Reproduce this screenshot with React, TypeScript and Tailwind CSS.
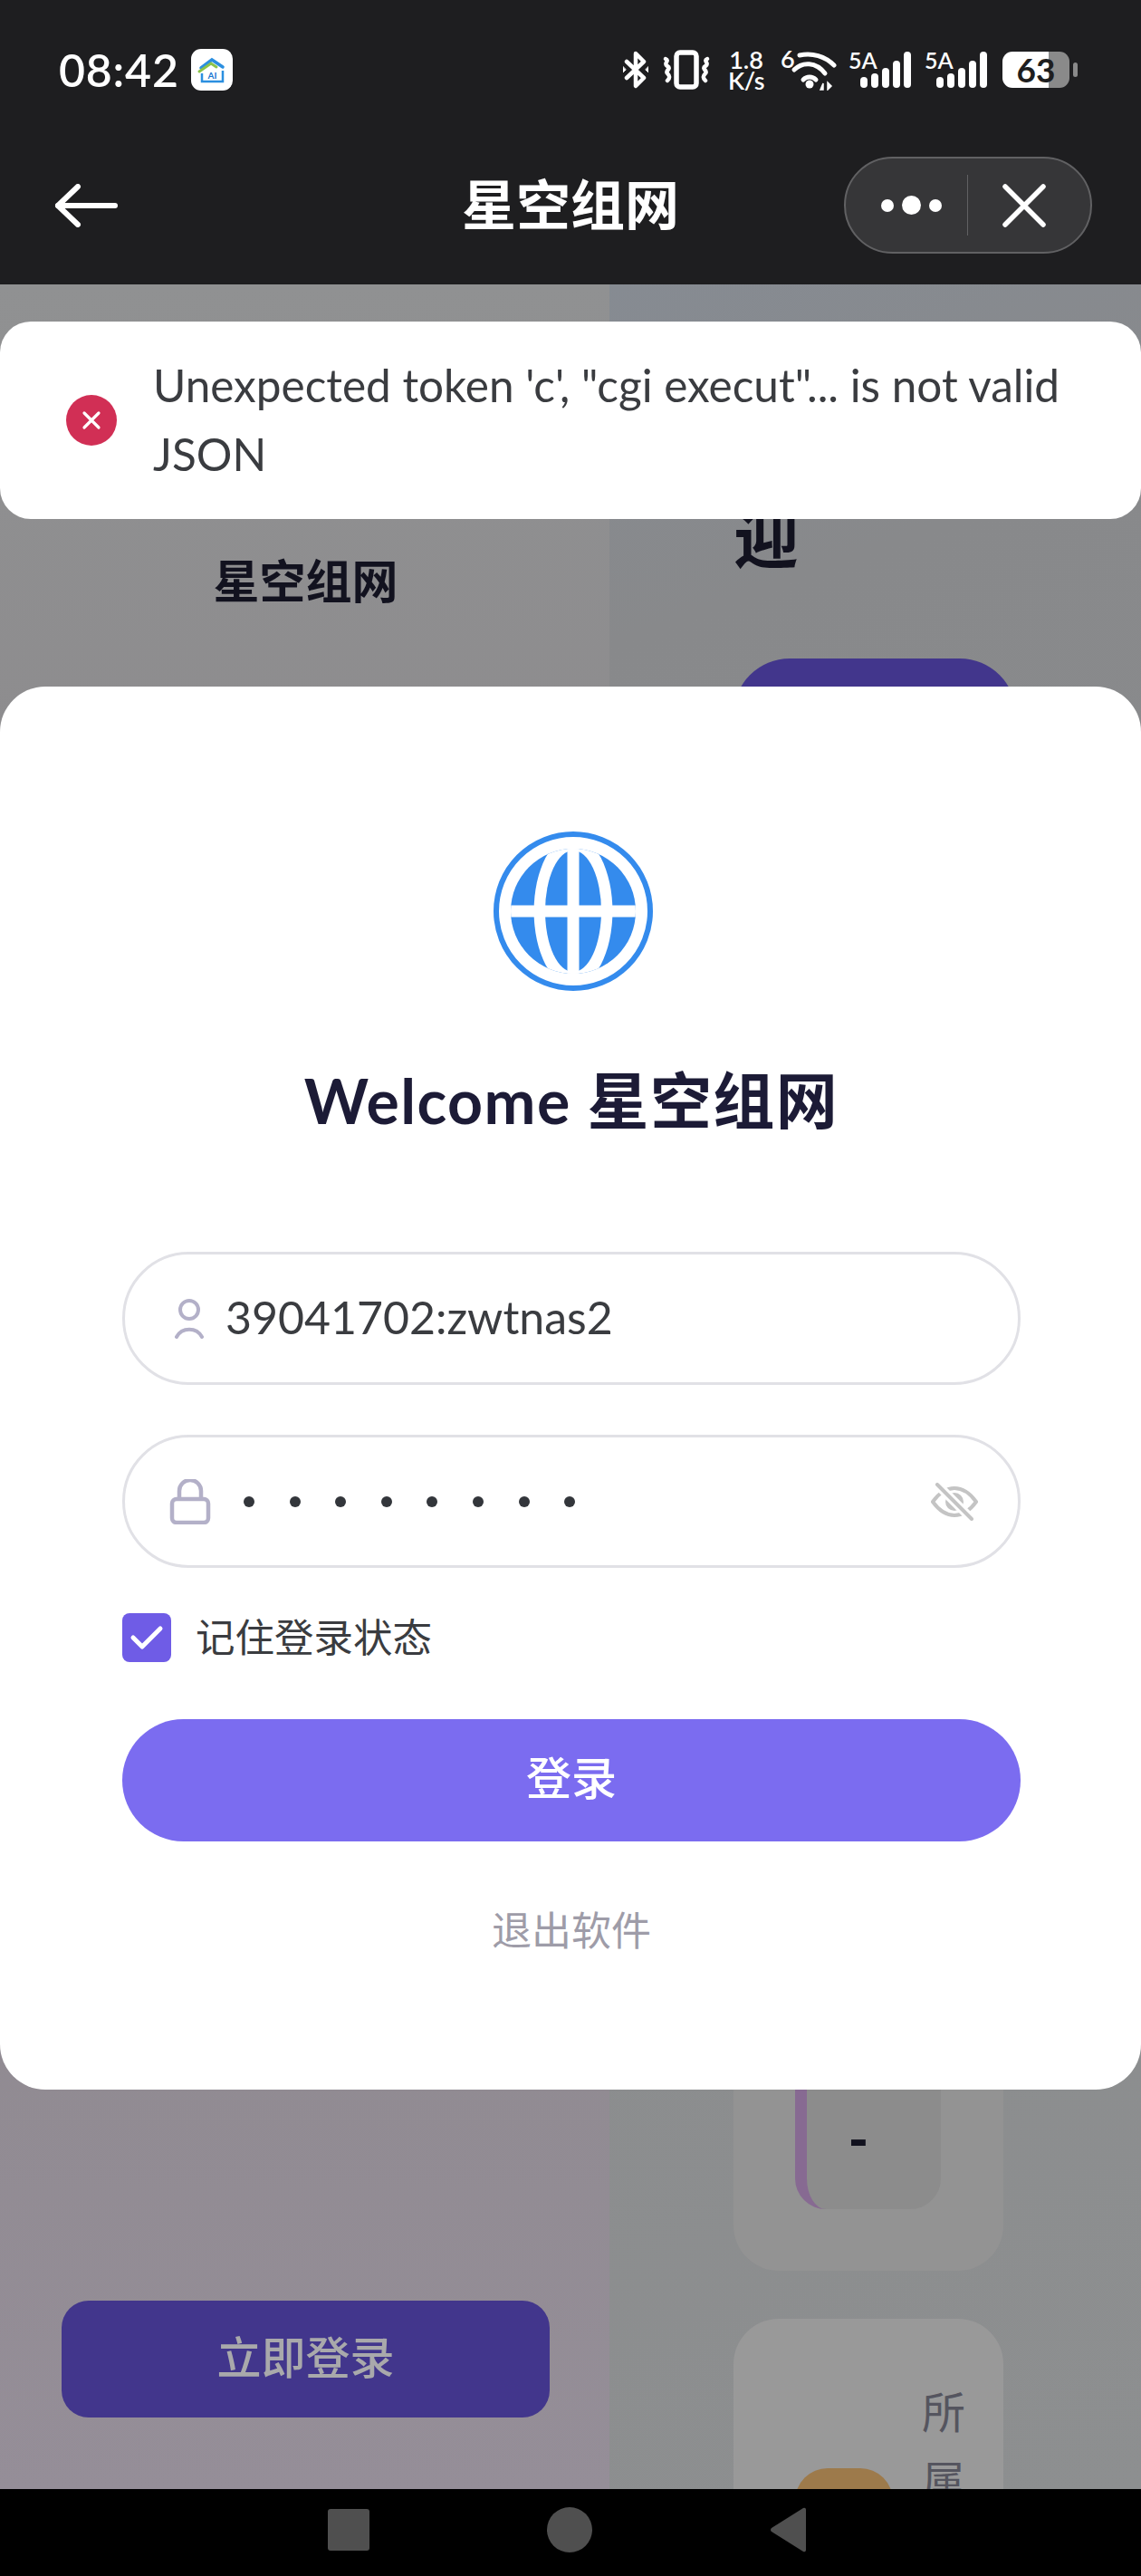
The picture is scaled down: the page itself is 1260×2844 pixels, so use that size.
const sans = 'font-["Lato","Noto_Sans_CJK_SC",sans-serif]';

function Signal() {
  return (
    <div className="relative h-[41px] w-[69px]">
      <span className="absolute left-0 top-[-2px] text-[25px] font-semibold leading-[24px] text-white">5A</span>
      <div className="absolute bottom-0 right-0 flex items-end gap-[4px]">
        <div className="h-[12px] w-[8px] rounded-full bg-white" />
        <div className="h-[16px] w-[8px] rounded-full bg-white" />
        <div className="h-[22px] w-[8px] rounded-full bg-white" />
        <div className="h-[30px] w-[8px] rounded-full bg-white" />
        <div className="h-[40px] w-[8px] rounded-full bg-white" />
      </div>
    </div>
  );
}

function StatusBar() {
  return (
    <div className="flex h-[153px] items-center justify-between pl-[65px] pr-[70px]">
      <div className="flex items-center gap-[13px]">
        <span className="text-[50px] font-semibold leading-none tracking-[0.8px] text-white">08:42</span>
        <div className="flex h-[46px] w-[46px] items-center justify-center rounded-[11px] bg-white">
          <svg width="46" height="46" viewBox="0 0 46 46" fill="none">
            <path d="M11 21 23 12l12 8" stroke="#2b8fe0" strokeWidth="3.5" strokeLinecap="round" />
            <path d="M9 25l13-9 6 4" stroke="#8bc34a" strokeWidth="3" strokeLinecap="round" />
            <path d="M12 27v9h23V24" stroke="#2b8fe0" strokeWidth="2.5" />
            <text x="23.5" y="33" textAnchor="middle" fontSize="10" fontWeight="700" fill="#1976d2">AI</text>
          </svg>
        </div>
      </div>
      <div className="flex items-center">
        <svg width="28" height="42" viewBox="0 0 28 42" fill="none" stroke="white" strokeWidth="4.5" strokeLinecap="round" strokeLinejoin="round">
          <path d="M4 12l19 18-9 9V3l9 9L4 30" />
          <path d="M0 18v6l3-3ZM28 18v6l-3-3Z" fill="white" strokeWidth="1" />
        </svg>
        <svg className="ml-[16px]" width="52" height="44" viewBox="0 0 52 44" fill="none" stroke="white" strokeLinecap="round">
          <rect x="15" y="3" width="22" height="38" rx="4" strokeWidth="5.5" />
          <path d="M3 10c5 2-3 5 2 8s-3 5 0 8 3 5 0 8" strokeWidth="4.5" />
          <path d="M49 10c-5 2 3 5-2 8s3 5 0 8-3 5 0 8" strokeWidth="4.5" />
        </svg>
        <div className="ml-[19px] flex w-[42px] flex-col items-center text-[27px] font-semibold leading-[23px] text-white">
          <span>1.8</span>
          <span className="tracking-[-0.5px]">K/s</span>
        </div>
        <div className="relative ml-[17px] h-[46px] w-[62px]">
          <span className="absolute left-0 top-[-1px] text-[27px] font-semibold leading-[24px] text-white">6</span>
          <svg className="absolute left-0 top-0" width="62" height="46" viewBox="0 0 62 46" fill="none" stroke="white" strokeWidth="5" strokeLinecap="round">
            <path d="M21 7c14-3 28 1 38 11" />
            <path d="M15 23c9-9 24-9 34 4" />
            <path d="M25 34c4-4 10-4 14 0" />
            <circle cx="32" cy="39" r="4.5" fill="white" stroke="none" />
            <path d="M44 45l3-7v7ZM52 37v8l4-4Z" fill="white" strokeWidth="1.5" />
          </svg>
        </div>
        <div className="ml-[13px]"><Signal /></div>
        <div className="ml-[15px]"><Signal /></div>
        <div className="ml-[17px] flex h-[40px] w-[74px] items-center justify-center rounded-[11px] bg-[linear-gradient(90deg,#fff_0_69%,#8a8a8a_69%)] text-[37px] font-bold leading-[40px] text-[#1e1e20]">
          63
        </div>
        <div className="ml-[4px] h-[16px] w-[5px] rounded-full bg-[#8a8a8a]" />
      </div>
    </div>
  );
}

function NavBar() {
  return (
    <div className="relative flex h-[161px] items-center justify-between pb-[14px] pl-[60px] pr-[54px]">
      <svg width="70" height="48" viewBox="0 0 70 48" fill="none" stroke="white" strokeWidth="6" strokeLinecap="round" strokeLinejoin="round">
        <path d="M26 3 4 24l22 21" />
        <path d="M4 24h63" />
      </svg>
      <span className="absolute inset-x-0 top-[37px] text-center text-[60px] font-semibold leading-[72px] text-white">星空组网</span>
      <div className="flex h-[107px] w-[274px] items-center rounded-full border-2 border-[#616163] bg-[#363638]">
        <div className="flex w-[134px] items-center justify-center gap-[9px] pl-[11px]">
          <div className="h-[14px] w-[14px] rounded-full bg-white" />
          <div className="h-[21px] w-[21px] rounded-full bg-white" />
          <div className="h-[14px] w-[14px] rounded-full bg-white" />
        </div>
        <div className="h-[67px] w-[1px] bg-[#616163]" />
        <div className="flex flex-1 items-center justify-center pr-[12px]">
          <svg width="50" height="50" viewBox="0 0 50 50" fill="none" stroke="white" strokeWidth="5.5" strokeLinecap="round">
            <path d="M4 4l42 42M46 4 4 46" />
          </svg>
        </div>
      </div>
    </div>
  );
}

function BehindPage() {
  return (
    <div className="flex h-[2434px] overflow-hidden bg-[#8e8f91]">
      <div className="flex w-[673px] flex-col items-center bg-gradient-to-b from-[#909192] via-[#8a8689] to-[#958e98] pl-[69px] pr-[67px]">
        <div className="mt-[296px] text-[51px] font-semibold leading-[64px] text-[#12121f]">星空组网</div>
        <div className="mb-[79px] mt-auto flex h-[129px] w-[539px] items-center justify-center rounded-[30px] bg-[#42368c] pb-[4px] text-[49px] font-medium text-[#a9a9ab]">
          立即登录
        </div>
      </div>
      <div className="flex flex-1 flex-col items-start bg-[linear-gradient(160deg,#868b92_0%,#88898b_15%,#8d8f90_100%)] pl-[137px]">
        <div className="mt-[239px] text-[72px] font-bold leading-[80px] text-[#12121f]">迎</div>
        <div className="mt-[94px] h-[160px] w-[312px] shrink-0 rounded-[62px] bg-[#42368c]" />
        <div className="mt-[1360px] h-[260px] w-[298px] shrink-0 rounded-b-[50px] bg-[#939393] pl-[68px] pt-[44px]">
          <div className="flex h-[148px] w-[161px] items-center justify-center rounded-b-[34px] border-l-[13px] border-[#876a92] bg-[#8c8c8c] pb-[8px] pr-[34px] text-[60px] font-black leading-none text-[#12121f]">
            -
          </div>
        </div>
        <div className="mt-[53px] flex h-[400px] w-[298px] shrink-0 rounded-t-[50px] bg-[#999999] pl-[68px] pr-[42px]">
          <div className="mt-[165px] h-[200px] w-[108px] rounded-t-[36px] bg-[#9d7a4b]" />
          <div className="ml-auto mt-[65px] flex flex-col text-[48px] leading-[76px] text-[#55555f]">
            <span>所</span>
            <span>属</span>
          </div>
        </div>
      </div>
    </div>
  );
}

function Toast() {
  return (
    <div className="absolute left-0 right-0 top-[355px] flex h-[218px] items-center rounded-[34px] bg-white pl-[73px] pr-[60px]">
      <div className="flex h-[56px] w-[56px] shrink-0 items-center justify-center rounded-full bg-[#d12f55]">
        <svg width="26" height="26" viewBox="0 0 26 26" fill="none" stroke="white" strokeWidth="3.2" strokeLinecap="round">
          <path d="M5 5l16 16M21 5 5 21" />
        </svg>
      </div>
      <p className="ml-[40px] pb-[2px] text-[49.5px] leading-[76px] text-[#3a3c40]">
        Unexpected token 'c', "cgi execut"... is not valid JSON
      </p>
    </div>
  );
}

function Globe() {
  return (
    <svg className="ml-[3px]" width="176" height="176" viewBox="0 0 176 176" fill="none">
      <circle cx="88" cy="88" r="85" stroke="#348bed" strokeWidth="6" />
      <clipPath id="globe-inner">
        <circle cx="88" cy="88" r="69" />
      </clipPath>
      <g clipPath="url(#globe-inner)">
        <rect width="176" height="176" fill="#348bed" />
        <ellipse cx="88" cy="88" rx="43.4" ry="83" fill="white" />
        <ellipse cx="88" cy="88" rx="31" ry="67" fill="#348bed" />
        <path d="M88 0v176M0 88h176" stroke="white" strokeWidth="13" />
      </g>
    </svg>
  );
}

function LoginModal() {
  return (
    <div className="absolute left-0 right-0 top-[758px] flex h-[1549px] flex-col items-center rounded-[50px] bg-white pl-[135px] pr-[133px] pt-[160px]">
      <Globe />
      <h1 className="mt-[79px] text-[68px] font-bold leading-[84px] tracking-[1.4px] text-[#1c1b36]">Welcome 星空组网</h1>
      <div className="mt-[125px] flex h-[147px] w-full items-center rounded-full border-[3px] border-[#e1e1e6] pl-[54px] text-[50px] text-[#3a3c40]">
        <svg width="34" height="44" viewBox="0 0 34 44" fill="none" stroke="#b3b0c8" strokeWidth="4" strokeLinecap="round">
          <circle cx="17" cy="12" r="10" />
          <path d="M3 42c6-11 22-11 28 0" />
        </svg>
        <span className="ml-[23px] pb-[2px]">39041702:zwtnas2</span>
      </div>
      <div className="mt-[55px] flex h-[147px] w-full items-center rounded-full border-[3px] border-[#e1e1e6] pl-[49px] pr-[44px]">
        <svg width="46" height="50" viewBox="0 0 46 50" fill="none" stroke="#b3b0c8" strokeWidth="4.5">
          <path d="M11 22V13a12 12 0 0 1 24 0v9" />
          <rect x="3" y="22" width="40" height="26" rx="5" />
        </svg>
        <div className="ml-[36px] flex gap-[38.6px]">
          {[0, 1, 2, 3, 4, 5, 6, 7].map((i) => (
            <div key={i} className="h-[12px] w-[12px] rounded-full bg-[#33363b]" />
          ))}
        </div>
        <svg className="ml-auto" width="52" height="42" viewBox="0 0 52 42" fill="none" stroke="#c4c4c4" strokeWidth="4" strokeLinecap="round" strokeLinejoin="round">
          <path d="M2 21C10 10 18 6 26 6s16 4 24 15c-8 11-16 15-24 15S10 32 2 21Z" />
          <circle cx="26" cy="21" r="10" fill="#c4c4c4" stroke="none" />
          <path d="M7 2l38 38" stroke="white" strokeWidth="10" strokeLinecap="butt" />
          <path d="M7 2l38 38" />
        </svg>
      </div>
      <label className="mt-[49px] flex w-full items-center self-start">
        <span className="flex h-[54px] w-[54px] items-center justify-center rounded-[8px] bg-[#6f5ce6]">
          <svg width="38" height="30" viewBox="0 0 38 30" fill="none" stroke="white" strokeWidth="5" strokeLinecap="round" strokeLinejoin="round">
            <path d="M4 15l10 10L34 5" />
          </svg>
        </span>
        <span className="ml-[27px] pb-[2px] text-[43.5px] leading-[54px] text-[#3a3c40]">记住登录状态</span>
      </label>
      <button className="mt-[62px] h-[135px] w-full rounded-full bg-[#7b6cf0] pb-[4px] text-[50px] font-medium text-white">登录</button>
      <div className="mt-[70px] text-[44px] leading-[56px] text-[#9e9ca8]">退出软件</div>
    </div>
  );
}

function BottomNav() {
  return (
    <div className="flex h-[96px] items-center justify-center bg-black pb-[6px]">
      <div className="ml-[-8px] h-[46px] w-[46px] rounded-[3px] bg-[#4f4f4f]" />
      <div className="ml-[196px] h-[50px] w-[50px] rounded-full bg-[#4f4f4f]" />
      <svg className="ml-[195px]" width="42" height="52" viewBox="0 0 42 52">
        <path d="M38 2 3 24a2.5 2.5 0 0 0 0 4l35 22a2 2 0 0 0 3-2V4a2 2 0 0 0-3-2Z" fill="#4f4f4f" />
      </svg>
    </div>
  );
}

export default function App() {
  return (
    <div className={`relative h-[2844px] w-[1260px] overflow-hidden bg-black ${sans}`}>
      <div className="bg-[#1e1e20]">
        <StatusBar />
        <NavBar />
      </div>
      <BehindPage />
      <BottomNav />
      <Toast />
      <LoginModal />
    </div>
  );
}
